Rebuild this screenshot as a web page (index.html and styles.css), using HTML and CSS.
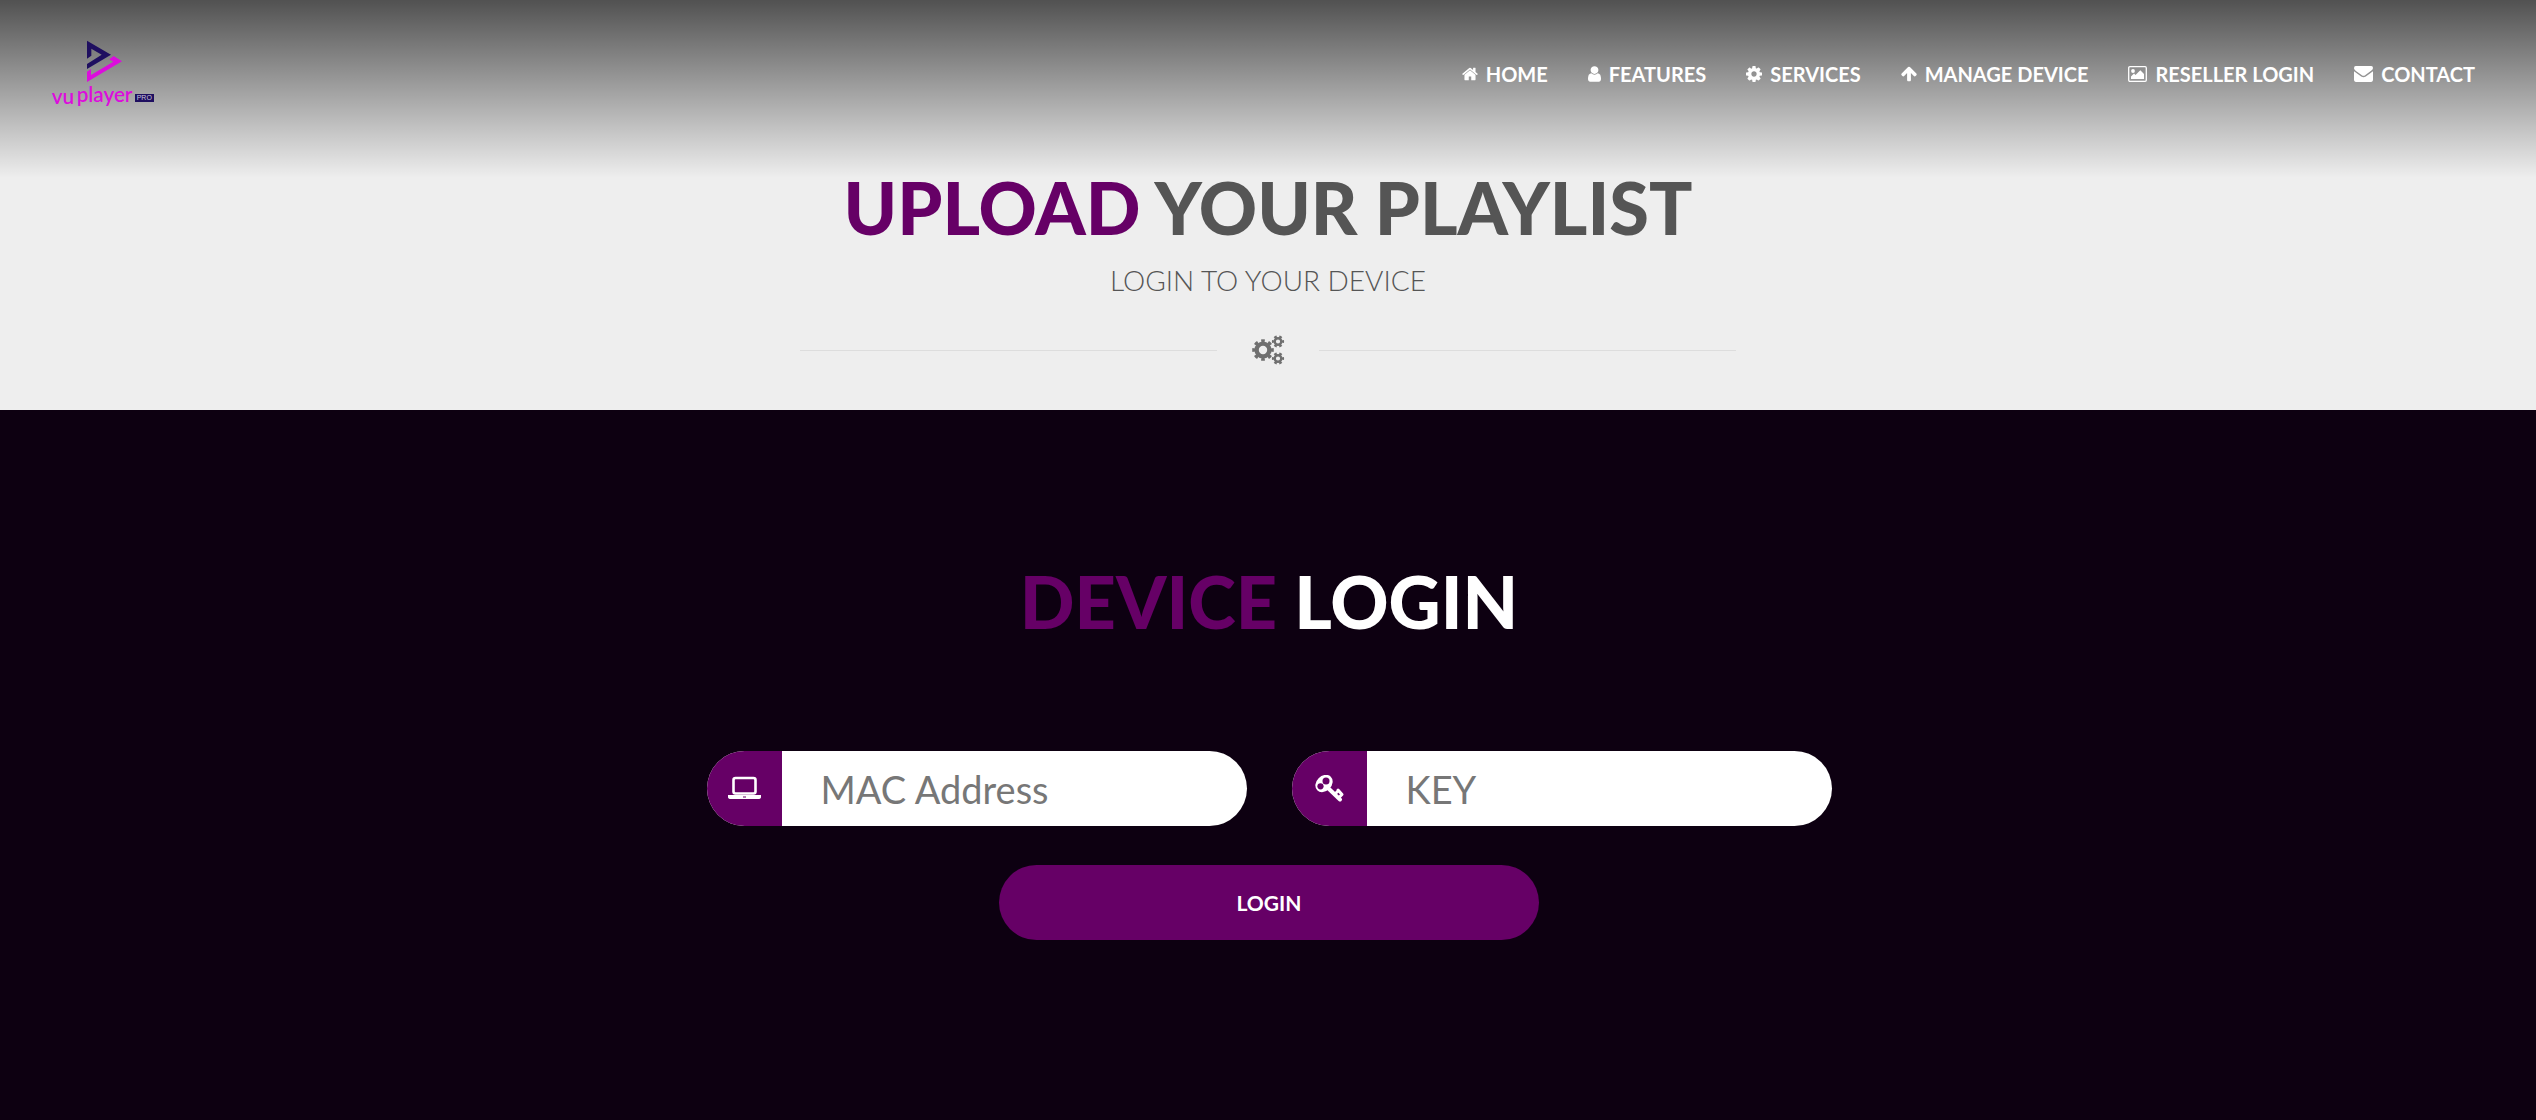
FILE: index.html
```html
<!DOCTYPE html>
<html lang="en">
<head>
<meta charset="utf-8">
<meta name="viewport" content="width=device-width, initial-scale=1">
<title>VU Player Pro</title>
<link rel="stylesheet" href="styles.css">
</head>
<body>
<header class="site-header">
  <a class="logo" href="#" aria-label="VU Player Pro">
    <svg viewBox="60 51 315 210" width="105" height="70">
      <path fill="#1f0f60" d="M171 62l72 42-72 43v-15l44-28-31-18v21l-13 9z"/>
      <path fill="#dc0ddc" d="M276 124l-105 62v-31l12-8v18l67-40-12-7 13-10z"/>
      <g class="logo-text"><text x="65" y="251">vu</text><text x="140" y="246">player</text></g>
      <rect x="315" y="222" width="57" height="24" fill="#1f0f60"/>
      <text class="logo-pro" x="320" y="241">PRO</text>
    </svg>
  </a>
  <nav class="nav">
    <a href="#"><svg class="icon" viewBox="64 64 1664 1664"><path d="M1472 992v480q0 26-19 45t-45 19h-384v-384h-256v384h-384q-26 0-45-19t-19-45v-480q0-1 .5-3t.5-3l575-474 575 474q1 2 1 6zm223-69l-62 74q-8 9-21 11h-3q-13 0-21-7l-692-577-692 577q-12 8-24 7-13-2-21-11l-62-74q-8-10-7-23.500t11-21.500l719-599q32-26 76-26t76 26l244 204v-195q0-14 9-23t23-9h192q14 0 23 9t9 23v408l219 182q10 8 11 21.500t-7 23.500z"/></svg>HOME</a>
    <a href="#"><svg class="icon icon-narrow" viewBox="256 128 1280 1536"><path d="M1536 1399q0 109-62.500 187t-150.500 78h-854q-88 0-150.500-78t-62.500-187q0-85 8.500-160.500t31.500-152 58.500-131 94-89 134.500-34.500q131 128 313 128t313-128q76 0 134.500 34.500t94 89 58.500 131 31.500 152 8.500 160.500zm-256-887q0 159-112.500 271.500t-271.500 112.500-271.500-112.500-112.500-271.500 112.500-271.500 271.500-112.500 271.500 112.500 112.500 271.500z"/></svg>FEATURES</a>
    <a href="#"><svg class="icon" viewBox="128 128 1536 1536"><path d="M1152 896q0-106-75-181t-181-75-181 75-75 181 75 181 181 75 181-75 75-181zm512-109v222q0 12-8 23t-20 13l-185 28q-19 54-39 91 35 50 107 138 10 12 10 25t-9 23q-27 37-99 108t-94 71q-12 0-26-9l-138-108q-44 23-91 38-16 136-29 186-7 28-36 28h-222q-14 0-24.500-8.500t-11.500-21.500l-28-184q-49-16-90-37l-141 107q-10 9-25 9-14 0-25-11-126-114-165-168-7-10-7-23 0-12 8-23 15-21 51-66.500t54-70.500q-27-50-41-99l-183-27q-13-2-21-12.500t-8-23.500v-222q0-12 8-23t19-13l186-28q14-46 39-92-40-57-107-138-10-12-10-24 0-10 9-23 26-36 98.500-107.500t94.500-71.500q13 0 26 10l138 107q44-23 91-38 16-136 29-186 7-28 36-28h222q14 0 24.500 8.500t11.500 21.500l28 184q49 16 90 37l142-107q9-9 24-9 13 0 25 10 129 119 165 170 7 8 7 22 0 12-8 23-15 21-51 66.500t-54 70.500q26 50 41 98l183 28q13 2 21 12.500t8 23.500z"/></svg>SERVICES</a>
    <a href="#"><svg class="icon" viewBox="90 128 1612 1612"><path d="M1675 971q0 51-37 90l-75 75q-38 38-91 38-54 0-90-38l-294-293v704q0 52-37.500 84.500t-90.500 32.500h-128q-53 0-90.500-32.500t-37.500-84.500v-704l-294 293q-36 38-90 38t-90-38l-75-75q-38-38-38-90 0-53 38-91l651-651q35-37 90-37 54 0 91 37l651 651q37 39 37 91z"/></svg>MANAGE DEVICE</a>
    <a href="#"><svg class="icon icon-wide" viewBox="0 0 19 16"><rect x=".7" y=".7" width="17.600" height="14.600" rx="1.200" fill="none" stroke="#fff" stroke-width="1.300"/><circle cx="5" cy="5" r="1.900"/><path d="M3 13v-2.500l3-3L7.500 9l4.800-4.800L16 8v5z"/></svg>RESELLER LOGIN</a>
    <a href="#"><svg class="icon icon-wide" viewBox="0 0 18 15"><path d="M0 2Q0 0 1.700 0h14.600Q18 0 18 1.800 18 3.200 16.200 4.500L10.500 8.600Q9 9.700 7.500 8.600L1.800 4.600Q0 3.300 0 2zM0 5l6.800 4.900Q9 11.400 11.200 9.900L18 5v8.300Q18 15 16.300 15H1.700Q0 15 0 13.300z"/></svg>CONTACT</a>
  </nav>
</header>
<main>
  <section class="intro">
    <h1 class="title"><span class="accent">UPLOAD</span> YOUR PLAYLIST</h1>
    <p class="subtitle">LOGIN TO YOUR DEVICE</p>
    <div class="divider">
      <svg width="34" height="32" viewBox="0 0 34 32" fill="none" stroke="#6f6f6f">
        <circle cx="12" cy="16" r="6.400" stroke-width="4.400"/>
        <circle cx="12" cy="16" r="9.300" stroke-width="3" pathLength="16" stroke-dasharray="1 1" stroke-dashoffset=".5"/>
        <g id="small-gear"><circle cx="27" cy="7.500" r="3.300" stroke-width="2.400"/><circle cx="27" cy="7.500" r="5" stroke-width="2.200" pathLength="12" stroke-dasharray="1 1" stroke-dashoffset=".5"/></g>
        <use href="#small-gear" y="17"/>
      </svg>
    </div>
  </section>
  <section class="login">
    <h2 class="title"><span class="accent">DEVICE</span> LOGIN</h2>
    <form class="login-form">
      <div class="field">
        <label for="mac" aria-label="MAC Address"><svg width="36" height="28" viewBox="0 0 36 28" fill="none" stroke="#fff"><rect x="7.500" y="3" width="22" height="15.500" rx="2" stroke-width="2.600"/><path stroke="none" fill="#fff" d="M2 20h33v2q0 2-3 2H5q-3 0-3-2z"/><path stroke="#606" d="M17 22h3"/></svg></label>
        <input id="mac" type="text" placeholder="MAC Address">
      </div>
      <div class="field">
        <label for="key" aria-label="Key"><svg width="34" height="28" viewBox="0 0 34 28" fill="none" stroke="#fff" stroke-linecap="round" stroke-linejoin="round"><ellipse cx="12" cy="8.500" rx="9.600" ry="7.600" transform="rotate(-45 12 8.500)" fill="#fff" stroke="none"/><g fill="#606" stroke="none"><circle cx="14" cy="6" r="3.500"/><circle cx="8.500" cy="11.300" r="3.100"/></g><path d="M16 13l12 11.500" stroke-width="4"/><path d="M23 19l2.500-2.500M26 15l4 4.500-2.500 2.500" stroke-width="3"/></svg></label>
        <input id="key" type="text" placeholder="KEY">
      </div>
      <button class="submit" type="submit">LOGIN</button>
    </form>
  </section>
</main>
</body>
</html>
```
FILE: styles.css
```css
* { box-sizing: border-box; }
body {
  margin: 0;
  min-height: 100vh;
  display: flex;
  flex-direction: column;
  background: #0d0011;
  color: #555;
  font-family: Lato, "Open Sans", sans-serif;
}
main { flex: 1; display: flex; flex-direction: column; }
.site-header {
  position: absolute;
  top: 0;
  left: 0;
  right: 0;
  display: flex;
  justify-content: space-between;
  align-items: flex-start;
  height: 178px;
  padding: 37px 61px 0 50px;
  background: linear-gradient(rgba(0, 0, 0, .66), rgba(0, 0, 0, 0));
}
.logo svg { display: block; }
.logo-text { font: 600 62px Lato, sans-serif; fill: #dc0ddc; }
.logo-pro { font: 400 21px "Liberation Sans", sans-serif; fill: #c9c4dc; }
.nav { display: flex; gap: 40px; padding-top: 24px; }
.nav a {
  display: flex;
  align-items: center;
  gap: 8px;
  color: #fff;
  font-size: 20px;
  font-weight: 700;
  line-height: 26px;
  text-decoration: none;
}
.icon { width: 16px; height: 16px; fill: #fff; }
.icon-narrow { width: 13px; }
.icon-wide { width: 19px; }
.intro {
  height: 410px;
  padding-top: 163px;
  background: #eee;
  text-align: center;
}
.title {
  margin: 0;
  font-size: 72px;
  font-weight: 900;
  line-height: 88px;
  text-align: center;
}
.accent { color: #606; }
.subtitle { margin: 11px 0 34px; font-size: 28px; font-weight: 300; line-height: 36px; }
.divider {
  display: flex;
  align-items: center;
  justify-content: center;
  gap: 34px;
  max-width: 936px;
  height: 36px;
  margin: 0 auto;
}
.divider::before, .divider::after { content: ""; flex: 1; height: 1px; background: #ddd; }
.login { flex: 1; padding: 147px 32px 120px 34px; color: #fff; }
.login-form {
  display: flex;
  flex-wrap: wrap;
  justify-content: center;
  gap: 39px 45px;
  max-width: 1125px;
  margin: 106px auto 0;
}
.field {
  display: flex;
  width: 540px;
  height: 75px;
  overflow: hidden;
  border-radius: 38px;
  background: #fff;
}
.field label {
  display: flex;
  align-items: center;
  justify-content: center;
  width: 75px;
  background: #606;
}
.field input {
  flex: 1;
  min-width: 0;
  padding: 0 39px;
  border: 0;
  background: transparent;
  color: #555;
  font: 400 38px Lato, "Open Sans", sans-serif;
}
.field input::placeholder { color: #777; opacity: 1; }
.submit {
  width: 540px;
  height: 75px;
  border: 0;
  border-radius: 38px;
  background: #606;
  color: #fff;
  font: 700 21px Lato, "Open Sans", sans-serif;
}
```
